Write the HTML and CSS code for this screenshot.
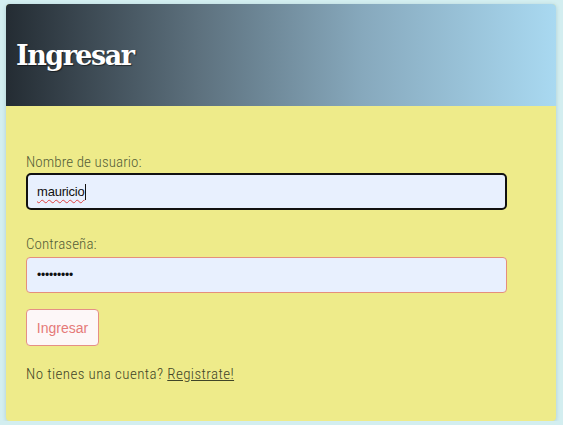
FILE: index.html
```html
<!DOCTYPE html>
<html lang="es">
<head>
<meta charset="utf-8">
<title>Ingresar</title>
<link rel="stylesheet" href="styles.css">
</head>
<body>
<div class="card">
  <header class="card-header">
    <h1 class="title">Ingresar</h1>
  </header>
  <form class="card-body">
    <div class="field">
      <label class="label">Nombre de usuario:</label>
      <div class="input input-focus"><span class="typed">mauricio</span><span class="caret"></span></div>
    </div>
    <div class="field">
      <label class="label">Contraseña:</label>
      <div class="input"><span class="dots">•••••••••</span></div>
    </div>
    <button type="button" class="btn">Ingresar</button>
    <p class="note">No tienes una cuenta? <a class="link" href="#">Registrate!</a></p>
  </form>
</div>
</body>
</html>
```
FILE: styles.css
```css
html, body {
  margin: 0;
  padding: 0;
}
body {
  background: #d3eef0;
  padding: 4px 7px 0 6px;
  font-family: "Liberation Sans Narrow", "Roboto Condensed", "DejaVu Sans Condensed", sans-serif;
}
.card {
  width: 550px;
  height: 417px;
  background: #eeeb8a;
  border-radius: 4px;
  box-shadow: 0 1px 4px rgba(0, 60, 80, 0.18);
  overflow: hidden;
  display: flex;
  flex-direction: column;
}
.card-header {
  height: 102px;
  background: linear-gradient(to right, #242c33 0%, #5d717e 35%, #87a9bd 65%, #a9d9f1 100%);
  display: flex;
  align-items: center;
  padding-left: 10px;
}
.title {
  margin: 0;
  font-family: "DejaVu Serif", serif;
  font-weight: bold;
  font-size: 27px;
  letter-spacing: -1.5px;
  color: #fff;
  text-shadow: 1px 1px 1px rgba(0,0,0,0.5);
}
.card-body {
  padding: 47px 20px 0 20px;
  display: flex;
  flex-direction: column;
}
.field {
  display: flex;
  flex-direction: column;
  margin-bottom: 17px;
}
.field + .field {
  margin-top: 8px;
}
.label {
  font-size: 15px;
  font-weight: 300;
  color: #555e38;
  margin-bottom: 2px;
  line-height: 18px;
  letter-spacing: 0.1px;
}
.field + .field .label {
  margin-bottom: 4px;
}
.input {
  width: 481px;
  height: 36px;
  box-sizing: border-box;
  background: #e8f0fe;
  border: 1px solid #e58f7c;
  border-radius: 4px;
  display: flex;
  align-items: center;
  padding-left: 10px;
  font-family: "Liberation Sans", Arial, sans-serif;
  font-size: 13px;
  color: #111;
}
.input-focus {
  border: 2px solid #111;
  border-radius: 5px;
  height: 37px;
  padding-left: 9px;
}
.typed {
  text-decoration: underline wavy #e04040;
  text-decoration-thickness: 1px;
  text-underline-offset: 3px;
  letter-spacing: -0.2px;
}
.caret {
  display: inline-block;
  width: 1px;
  height: 16px;
  background: #111;
}
.dots {
  font-size: 12px;
  letter-spacing: -0.2px;
}
.btn {
  align-self: flex-start;
  width: 73px;
  height: 37px;
  background: #fdf7f8;
  border: 1px solid #e58f86;
  border-radius: 4px;
  color: #e57a78;
  font-family: "Liberation Sans", Arial, sans-serif;
  font-size: 14px;
  padding: 0;
  margin-top: -1px;
}
.note {
  margin: 19px 0 0 0;
  font-size: 15px;
  font-weight: 300;
  color: #3f4528;
  letter-spacing: 0.4px;
}
.link {
  color: #3f4528;
  text-decoration: underline;
}
```
